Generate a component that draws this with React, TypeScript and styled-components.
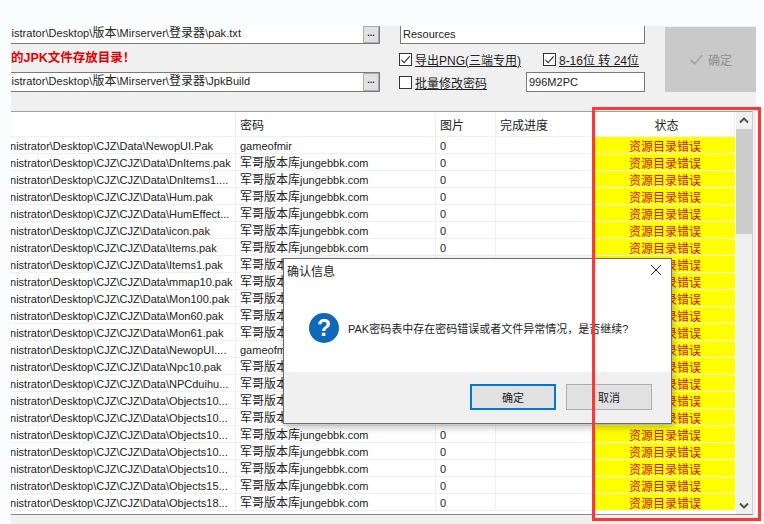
import React from 'react'
import styled, { createGlobalStyle } from 'styled-components'

const UI_FONT = `"Liberation Sans", "Noto Sans CJK SC", sans-serif`

const GlobalStyle = createGlobalStyle`
  html, body {
    margin: 0;
    padding: 0;
    background: #fbfcfe;
  }
  * {
    box-sizing: border-box;
  }
`

const Page = styled.div`
  width: 764px;
  height: 524px;
  padding: 26px 8px 0 11px;
  overflow: hidden;
  position: relative;
  font-family: ${UI_FONT};
  font-size: 11px;
  color: #222;
`

const Cjk = styled.span`
  font-size: 12px;
`

const Win = styled.div`
  height: 498px;
  background: #f0f0f0;
  overflow: hidden;
`

const TopBar = styled.div`
  display: flex;
  height: 85px;
`

const PathCol = styled.div`
  width: 369px;
  display: flex;
  flex-direction: column;
`

const PathField = styled.div<{ $h: number }>`
  height: ${({ $h }) => $h}px;
  background: #fff;
  border: 1px solid #7a7a7a;
  border-left: 0;
  border-top-width: ${({ $h }) => ($h < 20 ? 0 : 1)}px;
  display: flex;
  align-items: center;
  justify-content: space-between;
  overflow: hidden;
  white-space: nowrap;
`

const PathText = styled.span`
  overflow: hidden;
  text-indent: -31px;
  line-height: 14px;
  margin-bottom: 3px;
  letter-spacing: 0.05px;
`

const MoreButton = styled.span`
  width: 16px;
  height: 100%;
  background: #e1e1e1;
  border: 1px solid #adadad;
  flex: none;
  font-size: 9px;
  font-weight: 700;
  line-height: 12px;
  text-align: center;
`

const HintLabel = styled.div`
  height: 28px;
  line-height: 29px;
  color: #e40000;
  font-weight: 700;
  font-size: 12.5px;
  white-space: nowrap;
`

const OptionCol = styled.div`
  width: 245px;
  margin-left: 20px;
  display: flex;
  flex-direction: column;
`

const TextField = styled.div<{ $w?: number; $h: number }>`
  width: ${({ $w }) => ($w ? `${$w}px` : '100%')};
  height: ${({ $h }) => $h}px;
  background: #fff;
  border: 1px solid #7a7a7a;
  border-top-width: ${({ $h }) => ($h < 20 ? 0 : 1)}px;
  padding: ${({ $h }) => ($h < 20 ? '0 0 2px 2px' : '0 0 0 2px')};
  display: flex;
  align-items: center;
`

const OptionRow = styled.div<{ $h: number }>`
  height: ${({ $h }) => $h}px;
  display: flex;
  align-items: center;
  justify-content: space-between;
  padding-top: ${({ $h }) => ($h > 20 ? 3 : 0)}px;
`

const Check = styled.label<{ $inset?: number }>`
  display: flex;
  align-items: center;
  gap: 3px;
  margin-left: -1px;
  margin-right: ${({ $inset }) => $inset ?? 0}px;
  font-size: 12px;
`

const CheckBox = styled.span`
  width: 13px;
  height: 13px;
  border: 1px solid #333;
  background: #fff;
  display: flex;
  align-items: center;
  justify-content: center;
`

const CheckText = styled.span`
  text-decoration: underline;
  white-space: nowrap;
`

const ConfirmButton = styled.div`
  width: 91px;
  height: 65px;
  margin: 1px 0 0 20px;
  background: #c9c9c9;
  color: #8e8e8e;
  font-size: 12px;
  display: flex;
  align-items: center;
  justify-content: center;
  gap: 4px;
`

const Table = styled.div`
  width: 742px;
  height: 404px;
  background: #fff;
  border-top: 1px solid #a0a0a0;
  border-bottom: 1px solid #8a8a8a;
  border-right: 1px solid #d0d0d0;
  display: flex;
`

const Grid = styled.div`
  width: 725px;
  overflow: hidden;
`

const Row = styled.div<{ $header?: boolean }>`
  display: grid;
  grid-template-columns: 225px 200px 60px 99px 140px;
  height: ${({ $header }) => ($header ? 25 : 17)}px;
  line-height: ${({ $header }) => ($header ? 29 : 19)}px;
  border-bottom: 1px solid #f0f0f0;
`

const Cell = styled.div`
  padding-left: 4px;
  border-right: 1px solid #f0f0f0;
  overflow: hidden;
  white-space: nowrap;
`

const FileCell = styled(Cell)`
  padding-left: 0;
  text-indent: -26px;
`

const HeadCell = styled(Cell)<{ $center?: boolean }>`
  font-size: 12px;
  text-align: ${({ $center }) => ($center ? 'center' : 'left')};
`

const StatusCell = styled.div`
  background: #ffff00;
  color: #d81000;
  font-size: 12px;
  line-height: 21px;
  text-align: center;
  overflow: hidden;
`

const ScrollBar = styled.div`
  width: 16px;
  margin-left: 1px;
  background: #f0f0f0;
  display: flex;
  flex-direction: column;
  align-items: center;
  justify-content: space-between;
`

const ScrollArrow = styled.div`
  height: 17px;
  display: flex;
  align-items: center;
  justify-content: center;
`

const ScrollThumb = styled.div`
  width: 16px;
  height: 105px;
  background: #cdcdcd;
`

const ScrollTrack = styled.div`
  flex: 1;
`

const Dialog = styled.div`
  position: absolute;
  left: 283px;
  top: 258px;
  width: 389px;
  height: 166px;
  background: #fff;
  border: 1px solid #6d6d6d;
  box-shadow: 2px 3px 8px rgba(0, 0, 0, 0.28);
  display: flex;
  flex-direction: column;
`

const DialogTitle = styled.div`
  height: 24px;
  padding: 0 9px 2px 3px;
  display: flex;
  align-items: center;
  justify-content: space-between;
  font-size: 12px;
`

const DialogBody = styled.div`
  flex: 1;
  padding-left: 25px;
  display: flex;
  align-items: center;
  gap: 9px;
  font-size: 11px;
`

const QuestionIcon = styled.div`
  width: 30px;
  height: 30px;
  border-radius: 50%;
  background: #0f68b8;
  color: #fff;
  font: 700 23px/30px "Liberation Sans", sans-serif;
  text-align: center;
`

const DialogFooter = styled.div`
  height: 51px;
  background: #f0f0f0;
  padding: 12px 19px 0 0;
  display: flex;
  justify-content: flex-end;
  gap: 10px;
`

const DialogButton = styled.div<{ $primary?: boolean }>`
  width: 86px;
  height: 26px;
  background: #e1e1e1;
  border: ${({ $primary }) => ($primary ? '2px solid #0078d7' : '1px solid #adadad')};
  font-size: 11px;
  display: flex;
  align-items: center;
  justify-content: center;
`

const Annotation = styled.div`
  position: absolute;
  left: 592px;
  top: 107px;
  width: 169px;
  height: 414px;
  border: 3.5px solid #ff3636;
  pointer-events: none;
`

const PREFIX = 'Administrator\\Desktop\\CJZ\\'
const PWD = 'jungebbk.com'

const files: [string, string][] = [
  ['Data\\NewopUI.Pak', 'gameofmir'],
  ['CJZ\\Data\\DnItems.pak', PWD],
  ['CJZ\\Data\\DnItems1....', PWD],
  ['CJZ\\Data\\Hum.pak', PWD],
  ['CJZ\\Data\\HumEffect...', PWD],
  ['CJZ\\Data\\icon.pak', PWD],
  ['CJZ\\Data\\Items.pak', PWD],
  ['CJZ\\Data\\Items1.pak', PWD],
  ['CJZ\\Data\\mmap10.pak', PWD],
  ['CJZ\\Data\\Mon100.pak', PWD],
  ['CJZ\\Data\\Mon60.pak', PWD],
  ['CJZ\\Data\\Mon61.pak', PWD],
  ['CJZ\\Data\\NewopUI....', 'gameofmir'],
  ['CJZ\\Data\\Npc10.pak', PWD],
  ['CJZ\\Data\\NPCduihu...', PWD],
  ['CJZ\\Data\\Objects10...', PWD],
  ['CJZ\\Data\\Objects10...', PWD],
  ['CJZ\\Data\\Objects10...', PWD],
  ['CJZ\\Data\\Objects10...', PWD],
  ['CJZ\\Data\\Objects10...', PWD],
  ['CJZ\\Data\\Objects15...', PWD],
  ['CJZ\\Data\\Objects18...', PWD]
]

const Tick: React.FC<{ size?: number; color?: string }> = ({ size = 11, color = '#333' }) => (
  <svg width={size} height={size} viewBox="0 0 12 12" fill="none">
    <path d="M1.5 6.5 L4.5 9.5 L10.5 2.5" stroke={color} strokeWidth="1.2" />
  </svg>
)

const Chevron: React.FC<{ up?: boolean }> = ({ up }) => (
  <svg width="10" height="7" viewBox="0 0 10 7" fill="none">
    <path d={up ? 'M1 5.5 L5 1.5 L9 5.5' : 'M1 1.5 L5 5.5 L9 1.5'} stroke="#555" strokeWidth="2" />
  </svg>
)

export default function App() {
  return (
    <Page>
      <GlobalStyle />
      <Win>
        <TopBar>
          <PathCol>
            <PathField $h={18}>
              <PathText>
                Administrator\Desktop\<Cjk>版本</Cjk>\Mirserver\<Cjk>登录器</Cjk>\pak.txt
              </PathText>
              <MoreButton>...</MoreButton>
            </PathField>
            <HintLabel>的JPK文件存放目录！</HintLabel>
            <PathField $h={20}>
              <PathText>
                Administrator\Desktop\<Cjk>版本</Cjk>\Mirserver\<Cjk>登录器</Cjk>\JpkBuild
              </PathText>
              <MoreButton>...</MoreButton>
            </PathField>
          </PathCol>
          <OptionCol>
            <TextField $h={18}>Resources</TextField>
            <OptionRow $h={28}>
              <Check>
                <CheckBox>
                  <Tick />
                </CheckBox>
                <CheckText>导出PNG(三端专用)</CheckText>
              </Check>
              <Check $inset={6}>
                <CheckBox>
                  <Tick />
                </CheckBox>
                <CheckText>8-16位 转 24位</CheckText>
              </Check>
            </OptionRow>
            <OptionRow $h={20}>
              <Check>
                <CheckBox />
                <CheckText>批量修改密码</CheckText>
              </Check>
              <TextField $w={119} $h={20}>996M2PC</TextField>
            </OptionRow>
          </OptionCol>
          <ConfirmButton>
            <Tick size={15} color="#a2a2a2" />
            确定
          </ConfirmButton>
        </TopBar>
        <Table>
          <Grid>
            <Row $header>
              <HeadCell />
              <HeadCell>密码</HeadCell>
              <HeadCell>图片</HeadCell>
              <HeadCell>完成进度</HeadCell>
              <HeadCell $center>状态</HeadCell>
            </Row>
            {files.map(([file, pwd], i) => (
              <Row key={i}>
                <FileCell>{PREFIX + file}</FileCell>
                <Cell>
                  {pwd === PWD && <Cjk>军哥版本库</Cjk>}
                  {pwd}
                </Cell>
                <Cell>0</Cell>
                <Cell />
                <StatusCell>资源目录错误</StatusCell>
              </Row>
            ))}
          </Grid>
          <ScrollBar>
            <ScrollArrow>
              <Chevron up />
            </ScrollArrow>
            <ScrollThumb />
            <ScrollTrack />
            <ScrollArrow>
              <Chevron />
            </ScrollArrow>
          </ScrollBar>
        </Table>
      </Win>
      <Dialog>
        <DialogTitle>
          确认信息
          <svg width="12" height="12" viewBox="0 0 12 12" fill="none">
            <path d="M1 1 L11 11 M11 1 L1 11" stroke="#222" strokeWidth="1" />
          </svg>
        </DialogTitle>
        <DialogBody>
          <QuestionIcon>?</QuestionIcon>
          PAK密码表中存在密码错误或者文件异常情况，是否继续?
        </DialogBody>
        <DialogFooter>
          <DialogButton $primary>确定</DialogButton>
          <DialogButton>取消</DialogButton>
        </DialogFooter>
      </Dialog>
      <Annotation />
    </Page>
  )
}
